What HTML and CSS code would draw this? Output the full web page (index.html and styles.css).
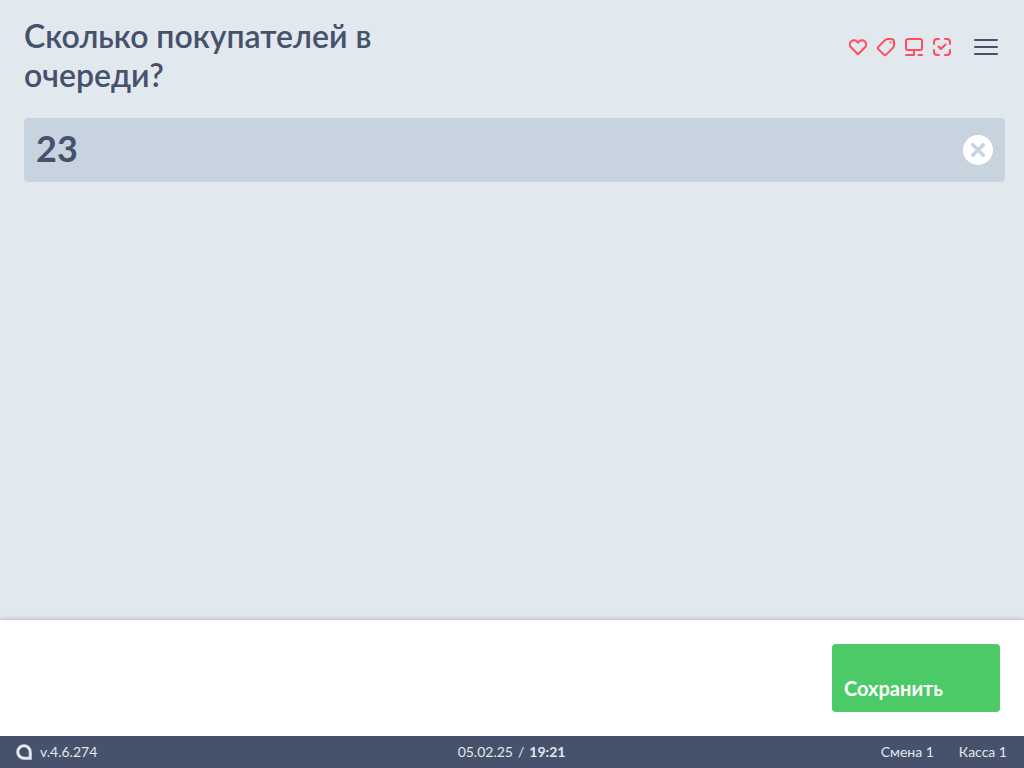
FILE: index.html
```html
<!DOCTYPE html>
<html lang="ru">
<head>
<meta charset="utf-8">
<meta name="viewport" content="width=device-width, initial-scale=1">
<title>Сколько покупателей в очереди?</title>
<link rel="stylesheet" href="styles.css">
</head>
<body>
<div class="app">
  <main class="content">
    <header class="header">
      <h1 class="title"><label for="count">Сколько покупателей в очереди?</label></h1>
      <div class="tools">
        <div class="statuses">
          <svg class="icon" viewBox="0 0 24 24" aria-hidden="true"><path d="M12 19.2 4.9 12.3C3.4 10.700 3.5 8 5.100 6.500 6.900 4.900 9.600 5 11.100 6.700L12 7.700l.9-1C14.400 5 17.100 4.900 18.900 6.500c1.600 1.500 1.700 4.200.2 5.800z"/></svg>
          <svg class="icon" viewBox="0 0 24 24" aria-hidden="true"><path d="m4.600 11.600 6.300-6.300A4 4 0 0 1 13.600 4H17a3 3 0 0 1 3 3v3.400a4 4 0 0 1-1.300 2.700l-6.300 6.300a2 2 0 0 1-2.800 0l-5-5a2 2 0 0 1 0-2.800z"/><circle class="dot" cx="16.500" cy="7.500" r="1"/></svg>
          <svg class="icon" viewBox="0 0 24 24" aria-hidden="true"><path d="M6 4h12a2 2 0 0 1 2 2v7a2 2 0 0 1-2 2H6a2 2 0 0 1-2-2V6a2 2 0 0 1 2-2zM12 15v5M4 20h8M16.500 20H20"/></svg>
          <svg class="icon" viewBox="0 0 24 24" aria-hidden="true"><path d="M4 9V7a3 3 0 0 1 3-3h2M15 4h2a3 3 0 0 1 3 3v2M20 15v2a3 3 0 0 1-3 3h-2M9 20H7a3 3 0 0 1-3-3v-2M8.500 11.500l2.500 2.500 4.500-4.500"/></svg>
        </div>
        <button class="menu" type="button" aria-label="Меню"><span></span><span></span><span></span></button>
      </div>
    </header>
    <div class="field">
      <input class="field-input" id="count" type="text" inputmode="numeric" value="23">
      <button class="clear" type="button" aria-label="Очистить">
        <svg viewBox="0 0 30 30" aria-hidden="true"><path d="M9.700 9.700l10.600 10.600M20.300 9.700L9.700 20.300"/></svg>
      </button>
    </div>
  </main>
  <section class="actions">
    <button class="save" type="button">Сохранить</button>
  </section>
  <footer class="status">
    <div class="version">
      <svg class="logo" viewBox="0 0 16 16" aria-hidden="true"><path d="M8 1.750A6.250 6.250 0 0 0 8 14.250h6.250V8A6.250 6.250 0 0 0 8 1.750z"/></svg>
      <span>v.4.6.274</span>
    </div>
    <div class="clock"><span>05.02.25</span><span>/</span><b>19:21</b></div>
    <div class="shift"><span>Смена 1</span><span>Касса 1</span></div>
  </footer>
</div>
</body>
</html>
```
FILE: styles.css
```css
* { box-sizing: border-box; }

body {
  margin: 0;
  font-family: Lato, "Noto Sans", sans-serif;
  color: #46516b;
  background: #e1e8ee;
}

button, input { font: inherit; color: inherit; border: 0; }
button { padding: 0; cursor: pointer; }

.app { display: flex; flex-direction: column; min-height: 100vh; }

.content { flex: 1; padding: 16px 19px 24px 24px; }

.header { display: flex; justify-content: space-between; align-items: flex-start; }

.title {
  margin: 0;
  max-width: 400px;
  font-size: 32px;
  line-height: 39px;
  font-weight: 600;
}

.tools { display: flex; align-items: center; gap: 20px; padding: 19px 7px 0 0; }
.statuses { display: flex; gap: 4px; }

.icon {
  display: block;
  width: 24px;
  height: 24px;
  fill: none;
  stroke: #ff4d5e;
  stroke-width: 2;
  stroke-linecap: round;
  stroke-linejoin: round;
}
.icon .dot { fill: #ff4d5e; stroke: none; }

.menu {
  display: flex;
  flex-direction: column;
  justify-content: center;
  gap: 5px;
  width: 24px;
  height: 24px;
  background: none;
}
.menu span { height: 2px; border-radius: 1px; background: #46516b; }

.field {
  display: flex;
  align-items: center;
  height: 64px;
  margin-top: 24px;
  padding: 0 12px;
  border-radius: 4px;
  background: #c7d3df;
}
.field-input {
  flex: 1;
  min-width: 0;
  height: 64px;
  padding: 0 0 4px;
  background: none;
  outline: none;
  font-size: 36px;
  font-weight: 700;
}
.clear { width: 30px; height: 30px; border-radius: 50%; background: #fff; }
.clear svg { display: block; fill: none; stroke: #c7d3df; stroke-width: 3.500; stroke-linecap: round; }

.actions {
  display: flex;
  justify-content: flex-end;
  padding: 24px;
  background: #fff;
  box-shadow: 0 -1px 4px rgba(70, 81, 107, 0.3);
}
.save {
  display: flex;
  align-items: flex-end;
  width: 168px;
  height: 68px;
  padding: 12px;
  border-radius: 4px;
  background: #4cca67;
  color: #fff;
  font-size: 20px;
  line-height: 24px;
  font-weight: 700;
}

.status {
  display: grid;
  grid-template-columns: 1fr auto 1fr;
  align-items: center;
  height: 32px;
  padding: 0 17px 0 16px;
  background: #46516b;
  color: #e1e8ee;
  font-size: 14px;
  line-height: 20px;
}
.version { display: flex; align-items: center; gap: 8px; }
.logo { width: 16px; height: 16px; fill: none; stroke: #e1e8ee; stroke-width: 3; }
.clock { display: flex; gap: 5px; }
.shift { display: flex; justify-content: flex-end; gap: 25px; }
```
